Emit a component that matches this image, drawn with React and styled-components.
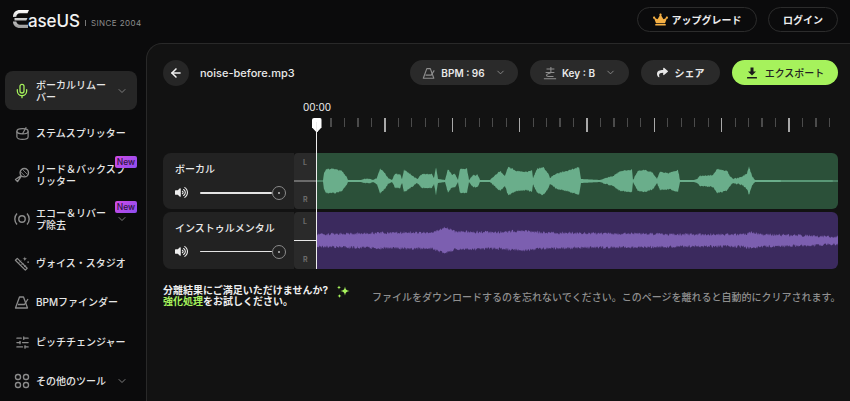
import React from 'react';
import styled, { createGlobalStyle } from 'styled-components';
import { ArrowLeft, ChevronDown, Mic, SlidersHorizontal } from 'lucide-react';
import { FaCrown, FaShare, FaVolumeUp } from 'react-icons/fa';

const GlobalStyle = createGlobalStyle`
    html, body {
        margin: 0;
        height: 100%;
        overflow: hidden;
        background: #0b0b0c;
    }
    #root {
        height: 401px;
    }
    * {
        box-sizing: border-box;
    }
`

const font = `Inter, "Noto Sans CJK JP", sans-serif`

const Page = styled.div`
    width: 850px;
    height: 401px;
    display: flex;
    flex-direction: column;
    font-family: ${font};
    color: #eee;
`

const Header = styled.header`
    height: 43px;
    flex: none;
    display: flex;
    align-items: center;
    justify-content: space-between;
    padding: 0 12px 4px 13px;
`

const Logo = styled.div`
    display: flex;
    align-items: center;
    height: 20px;
    margin-top: 1px;
`

const LogoMarkBox = styled.svg`
    margin-top: -3px;
    flex: none;
`

const LogoName = styled.span`
    font-size: 17px;
    font-weight: 500;
    color: #f2f2f2;
    letter-spacing: -0.1px;
    margin-left: -1px;
    margin-top: 2px;
`

const LogoSince = styled.span`
    font-size: 8px;
    color: #8d8d8d;
    letter-spacing: 0.45px;
    margin: 6px 0 0 5px;
    padding-left: 6px;
    position: relative;

    &::before {
        content: '';
        position: absolute;
        left: 0;
        top: 2px;
        bottom: 2px;
        width: 1px;
        background: #777;
    }
`

const HeaderActions = styled.div`
    display: flex;
    gap: 11px;
`

const OutlineButton = styled.button`
    width: ${p => p.$w}px;
    height: 25px;
    border: 1px solid #2c2c2c;
    border-radius: 13px;
    background: transparent;
    color: #eee;
    font-family: ${font};
    font-size: 10px;
    font-weight: 700;
    display: flex;
    align-items: center;
    justify-content: center;
    gap: 4px;
    padding: 0;
`

const Body = styled.div`
    flex: 1;
    display: flex;
    min-height: 0;
`

const Sidebar = styled.nav`
    width: 146px;
    flex: none;
    padding: 28px 9px 0 5px;
    display: flex;
    flex-direction: column;
`

const NavItem = styled.div`
    position: relative;
    height: ${p => p.$h}px;
    flex: none;
    display: flex;
    align-items: center;
    padding-left: 9px;
    border-radius: 8px;
    background: ${p => (p.$active ? '#262626' : 'transparent')};
    color: #8b8b8b;
`

const NavIcon = styled.span`
    width: 16px;
    flex: none;
    display: flex;
    align-items: center;
    justify-content: center;
`

const NavLabel = styled.span`
    margin-left: 6px;
    font-size: 10px;
    line-height: 12px;
    font-weight: 500;
    color: #e6e6e6;
    white-space: nowrap;
`

const NavChevron = styled(ChevronDown)`
    position: absolute;
    right: 9px;
    top: 50%;
    margin-top: -6px;
    color: #7d7d7d;
`

const NewBadge = styled.span`
    position: absolute;
    right: 0;
    top: ${p => p.$top}px;
    width: 22px;
    height: 12px;
    border-radius: 2px;
    background: linear-gradient(135deg, #d24be6, #8c4df0);
    color: #2c1740;
    font-size: 8.5px;
    font-weight: 500;
    line-height: 12px;
    text-align: center;
`

const Panel = styled.main`
    flex: 1;
    min-width: 0;
    background: #121212;
    border-top: 1px solid #292929;
    border-left: 1px solid #292929;
    border-top-left-radius: 16px;
    padding: 16px 12px 0 16px;
`

const Toolbar = styled.div`
    display: flex;
    align-items: center;
    height: 25px;
`

const BackButton = styled.button`
    width: 26px;
    height: 26px;
    border: 0;
    border-radius: 50%;
    background: #262626;
    color: #f2f2f2;
    display: flex;
    align-items: center;
    justify-content: center;
    padding: 0;
`

const FileName = styled.span`
    margin-left: 11px;
    font-size: 11px;
    font-weight: 500;
    color: #e8e8e8;
`

const ToolbarActions = styled.div`
    margin-left: auto;
    display: flex;
    gap: 12px;
`

const Pill = styled.button`
    width: ${p => p.$w}px;
    height: 25px;
    border: 0;
    border-radius: 13px;
    background: ${p => (p.$primary ? '#a6f25c' : '#2a2a2a')};
    color: ${p => (p.$primary ? '#222' : '#e8e8e8')};
    font-family: ${font};
    font-size: 10px;
    font-weight: ${p => (p.$primary ? 500 : 600)};
    display: flex;
    align-items: center;
    justify-content: center;
    gap: ${p => p.$gap || 5}px;
    padding: 0;
`

const PillIcon = styled.span`
    color: #8f8f8f;
    display: flex;
`

const PillChevron = styled(ChevronDown)`
    color: #8c8c8c;
    margin-left: 5px;
`

const Timeline = styled.div`
    position: relative;
    margin-top: 15px;
`

const TimeLabel = styled.div`
    margin-left: 140px;
    width: 26px;
    height: 18px;
    font-size: 10px;
    line-height: 14px;
    text-align: center;
    color: #eee;
`

const Ruler = styled.div`
    display: flex;
    margin-left: 154px;
    height: 35px;
`

const TickCell = styled.div`
    width: 13.48px;
    flex: none;
`

const Tick = styled.div`
    width: 1.2px;
    height: ${p => (p.$major ? 14 : 9)}px;
    background: ${p => (p.$major ? '#a8a8a8' : '#4b4b4b')};
`

const PlayheadLine = styled.div`
    position: absolute;
    left: 153px;
    top: 22px;
    bottom: 0;
    width: 1.2px;
    background: #ececec;
    z-index: 2;
`

const PlayheadKnob = styled.div`
    position: absolute;
    left: 149px;
    top: 18px;
    width: 9.5px;
    height: 14px;
    background: #fff;
    border-radius: 2px 2px 1px 1px;
    clip-path: polygon(0 0, 100% 0, 100% 68%, 55% 100%, 45% 100%, 0 68%);
    z-index: 2;
`

const Tracks = styled.div`
    display: flex;
    flex-direction: column;
    gap: 3px;
`

const Track = styled.div`
    display: flex;
    height: ${p => p.$h}px;
`

const Controls = styled.div`
    width: 131px;
    flex: none;
    background: #222;
    border-radius: 8px 0 0 8px;
    padding: 9px 8px 0 12px;
`

const TrackName = styled.div`
    font-size: 10px;
    line-height: 14px;
    font-weight: 500;
    color: #eaeaea;
`

const VolumeRow = styled.div`
    display: flex;
    align-items: center;
    margin-top: 9px;
    height: 15px;
    color: #eee;
`

const VolumeBar = styled.div`
    flex: 1;
    height: ${p => p.$thick}px;
    margin-left: 12px;
    background: #e4e4e4;
    border-radius: 1px;
`

const VolumeThumb = styled.div`
    width: 14px;
    height: 14px;
    flex: none;
    border: 1px solid #8a8a8a;
    border-radius: 50%;
    display: flex;
    align-items: center;
    justify-content: center;

    &::after {
        content: '';
        width: 2px;
        height: 2px;
        border-radius: 50%;
        background: #bbb;
    }
`

const Channels = styled.div`
    width: 23px;
    flex: none;
    background: #2a2a2a;
    border-radius: 4px 0 0 4px;
    display: flex;
    flex-direction: column;
    align-items: stretch;
    font-size: 7px;
    font-weight: 700;
    color: #6a6a6a;
`

const ChannelLetter = styled.div`
    flex: 1;
    padding: 5px 0 5px 9px;
    display: flex;
    align-items: ${p => (p.$bottom ? 'flex-end' : 'flex-start')};
`

const ChannelLine = styled.div`
    height: ${p => p.$thick}px;
    background: ${p => p.$color};
`

const WaveBox = styled.div`
    flex: 1;
    min-width: 0;
    background: ${p => p.$bg};
    border-radius: 0 6px 6px 0;
    overflow: hidden;
`

const WaveSvg = styled.svg`
    display: block;
    width: 100%;
    height: 100%;
`

const Footer = styled.div`
    display: flex;
    margin-top: 16px;
`

const Retry = styled.div`
    width: 209px;
    flex: none;
    display: flex;
    align-items: flex-start;
    font-size: 10px;
    line-height: 11px;
    font-weight: 700;
    color: #eee;
`

const Highlight = styled.span`
    color: #a6f25c;
`

const Sparkle = styled.svg`
    margin: 0 0 0 8px;
    flex: none;
`

const Notice = styled.div`
    font-size: 10px;
    line-height: 24px;
    color: #8f8f8f;
    font-weight: 500;
    white-space: nowrap;
`

const StemIcon = () => (
    <svg width="15" height="15" viewBox="0 0 16 16" fill="none" stroke="currentColor" strokeWidth="1.3">
        <path d="M2 5.500c0-1.600 2.600-2.800 6-2.800s6 1.200 6 2.800v6c0 1.600-2.600 2.800-6 2.800s-6-1.200-6-2.800z" />
        <path d="M2 5.500c0 1.600 2.600 2.800 6 2.800s6-1.200 6-2.800M8 8.300l4-7" />
    </svg>
)

const LeadMicIcon = () => (
    <svg width="16" height="16" viewBox="0 0 16 16" fill="none" stroke="currentColor" strokeWidth="1.4" strokeLinejoin="round">
        <circle cx="10.300" cy="5.700" r="4.200" />
        <path d="M7.500 8.800 3.500 14.500 1.500 12.500 7.200 8.500" />
        <path d="M8.500 2.500l5 5M6.800 5l4.500 4.500" strokeWidth="0.8" />
    </svg>
)

const EchoIcon = () => (
    <svg width="16" height="16" viewBox="0 0 16 16" fill="none" stroke="currentColor" strokeWidth="1.4">
        <circle cx="8" cy="8" r="3.200" />
        <path d="M3 2.500a8 8 0 0 0 0 11M13 2.500a8 8 0 0 1 0 11" />
    </svg>
)

const WandIcon = () => (
    <svg width="17" height="17" viewBox="0 0 17 17" fill="none" stroke="currentColor" strokeWidth="1.300">
        <path d="M3.500 3 14 13.500 12 15.500 1.500 5z" strokeLinejoin="round" />
        <path d="M5.500 7.500 7.500 5.500M8 10 10 8M10.500 12.500l2-2" strokeWidth="1" />
        <path d="M11.500 1c.2 1.600.9 2.300 2.500 2.500-1.600.2-2.300.9-2.500 2.500-.2-1.600-.9-2.300-2.500-2.500 1.600-.2 2.300-.9 2.500-2.500z" fill="currentColor" stroke="none" />
        <circle cx="15" cy="7" r="0.900" fill="currentColor" stroke="none" />
    </svg>
)

const MetronomeIcon = ({ size = 16 }) => (
    <svg width={size} height={size} viewBox="0 0 16 16" fill="none" stroke="currentColor" strokeWidth="1.3" strokeLinejoin="round">
        <path d="M5.500 3h4l4 11H1.500z" />
        <path d="M4 10.500h6.500L14 5" />
    </svg>
)

const KeyIcon = () => (
    <svg width="14" height="14" viewBox="0 0 16 16" fill="none" stroke="#8f8f8f" strokeWidth="1.200">
        <path d="M1 14.500h14M4 3.500h9M3 7.500h10M9 1v6c0 2 -5 1 -5 3.500 0 2 5 1.500 8 1.500" />
    </svg>
)

const GridIcon = () => (
    <svg width="16" height="16" viewBox="0 0 16 16" fill="none" stroke="currentColor" strokeWidth="1.400">
        <rect x="1.500" y="1.500" width="5" height="5" rx="2.200" />
        <rect x="9.500" y="1.500" width="5" height="5" rx="2.200" />
        <rect x="1.500" y="9.500" width="5" height="5" rx="2.200" />
        <rect x="9.500" y="9.500" width="5" height="5" rx="2.200" />
    </svg>
)

const DownloadIcon = () => (
    <svg width="12" height="12" viewBox="0 0 12 12" fill="#1c1c1c">
        <path d="M4.500 0.500h3v4h2.500L6 8.500 2 4.500h2.500z" />
        <rect x="1" y="10" width="10" height="1.500" rx="0.500" />
    </svg>
)

const LogoMark = () => (
    <LogoMarkBox width="16" height="18" viewBox="0 0 16 18">
        <defs>
            <linearGradient id="logoFade" x1="0" y1="0" x2="0" y2="1">
                <stop offset="0" stopColor="#ffffff" />
                <stop offset="1" stopColor="#9a9a9a" />
            </linearGradient>
        </defs>
        <path
            fill="url(#logoFade)"
            d="M0 7C0 2.500 3 0 7 0h9l-1.500 3.200H7C4.500 3.200 3.300 5 3.300 6.800zM1.500 8h13l-1.200 2.600H1.500zM0 11.500h3.300c.4 2 1.700 3.200 3.700 3.200h8V18H7c-4 0-7-2.500-7-6.500z"
        />
    </LogoMarkBox>
)

// rough outline of the vocal take, [x, half height] in px from the start of the track
const vocalShape = [
    [0, 0.6], [6, 0.6], [7, 8], [9, 12], [18, 12], [25, 10], [29, 5], [31, 1], [44, 1], [47, 2], [52, 2.500], [56, 1],
    [60, 3], [63, 12], [68, 8], [71, 3], [75, 1], [78, 7], [83, 7], [85, 2], [87, 11], [89, 10], [100, 2], [105, 7],
    [115, 7], [117, 3], [119, 14], [121, 2], [128, 1], [131, 12], [135, 6], [138, 7], [141, 1], [143, 12], [150, 12], [152, 1],
    [156, 6], [161, 6], [163, 1], [173, 1], [183, 10], [188, 5], [191, 14], [200, 10], [210, 9], [215, 11], [216, 3],
    [220, 12], [226, 14], [231, 8], [233, 3], [240, 8], [250, 10], [259, 13], [262, 14], [264, 2], [283, 1], [296, 5],
    [303, 10], [315, 11], [316, 1], [321, 10], [328, 11], [336, 8], [340, 2], [343, 9], [352, 8], [361, 11], [363, 1],
    [377, 1], [380, 2], [383, 5], [396, 6], [400, 12], [410, 10], [413, 5], [416, 2], [425, 4], [430, 8], [432, 14],
    [435, 5], [438, 1], [521, 0.6],
]

// instrumental stays at a fairly even level and thins out at the end
const backingShape = [
    [0, 6], [40, 7], [90, 8], [115, 8], [128, 13], [138, 9], [180, 8], [206, 10], [225, 8], [290, 7], [380, 6], [425, 6],
    [435, 8], [445, 6], [490, 5], [510, 4], [521, 4],
]

const levelAt = (shape, x) => {
    for (let i = 1; i < shape.length; i++) {
        if (x <= shape[i][0]) {
            const [x0, y0] = shape[i - 1]
            const [x1, y1] = shape[i]
            return y0 + ((y1 - y0) * (x - x0)) / (x1 - x0)
        }
    }
    return 1
}

// repeatable noise, so the wave stays the same on every render
const hash = x => {
    const s = Math.sin(x * 127.1) * 43758.5453
    return s - Math.floor(s)
}

const buildWave = (shape, center, noise) => {
    const upper = []
    const lower = []
    for (let x = 0; x <= 521; x += 0.5) {
        const level = levelAt(shape, x)
        const amount = level > 2 ? noise : 0
        const up = (hash(x) - 0.5) * 2 * amount
        const down = (hash(x + 91.7) - 0.5) * 2 * amount
        upper.push(`${x} ${(center - level - up).toFixed(2)}`)
        lower.unshift(`${x} ${(center + level + down).toFixed(2)}`)
    }
    return `M${upper.join('L')}L${lower.join('L')}Z`
}

const Wave = ({ shape, center, noise, height, color }) => (
    <WaveSvg viewBox={`0 0 521 ${height}`} preserveAspectRatio="none">
        <path d={buildWave(shape, center, noise)} fill={color} />
    </WaveSvg>
)

const navItems = [
    { h: 39, label: <>ボーカルリムー<br />バー</>, icon: <Mic size={18} color="#a6f25c" strokeWidth={1.9} />, chevron: true, active: true },
    { h: 46, label: 'ステムスプリッター', icon: <StemIcon /> },
    { h: 38, label: <>リード＆バックスプ<br />リッター</>, icon: <LeadMicIcon />, badgeTop: 0 },
    { h: 50, label: <>エコー＆リバー<br />プ除去</>, icon: <EchoIcon />, chevron: true, badgeTop: 7 },
    { h: 38, label: 'ヴォイス・スタジオ', icon: <WandIcon /> },
    { h: 40, label: 'BPMファインダー', icon: <MetronomeIcon /> },
    { h: 40, label: 'ピッチチェンジャー', icon: <SlidersHorizontal size={15} /> },
    { h: 38, label: 'その他のツール', icon: <GridIcon />, chevron: true },
]

const ticks = Array.from({ length: 39 }, (_, i) => i)

const TrackRow = ({ name, h, thick, lineColor, lineThick, bg, children }) => (
    <Track $h={h}>
        <Controls>
            <TrackName>{name}</TrackName>
            <VolumeRow>
                <FaVolumeUp size={13} />
                <VolumeBar $thick={thick} />
                <VolumeThumb />
            </VolumeRow>
        </Controls>
        <Channels>
            <ChannelLetter>L</ChannelLetter>
            <ChannelLine $thick={lineThick} $color={lineColor} />
            <ChannelLetter $bottom>R</ChannelLetter>
        </Channels>
        <WaveBox $bg={bg}>{children}</WaveBox>
    </Track>
)

const App = () => {
    return (
        <Page>
            <GlobalStyle />
            <Header>
                <Logo>
                    <LogoMark />
                    <LogoName>aseUS</LogoName>
                    <LogoSince>SINCE 2004</LogoSince>
                </Logo>
                <HeaderActions>
                    <OutlineButton $w={120}>
                        <FaCrown size={15} color="#f5b044" />
                        アップグレード
                    </OutlineButton>
                    <OutlineButton $w={70}>ログイン</OutlineButton>
                </HeaderActions>
            </Header>
            <Body>
                <Sidebar>
                    {navItems.map((item, i) => (
                        <NavItem key={i} $h={item.h} $active={item.active}>
                            <NavIcon>{item.icon}</NavIcon>
                            <NavLabel>{item.label}</NavLabel>
                            {item.chevron && <NavChevron size={12} />}
                            {item.badgeTop !== undefined && <NewBadge $top={item.badgeTop}>New</NewBadge>}
                        </NavItem>
                    ))}
                </Sidebar>
                <Panel>
                    <Toolbar>
                        <BackButton><ArrowLeft size={14} strokeWidth={2.6} /></BackButton>
                        <FileName>noise-before.mp3</FileName>
                        <ToolbarActions>
                            <Pill $w={108}>
                                <PillIcon><MetronomeIcon size={14} /></PillIcon>
                                BPM : 96
                                <PillChevron size={11} />
                            </Pill>
                            <Pill $w={99}>
                                <KeyIcon />
                                Key : B
                                <PillChevron size={11} />
                            </Pill>
                            <Pill $w={79} $gap={7}>
                                <FaShare size={11} />
                                シェア
                            </Pill>
                            <Pill $w={106} $gap={7} $primary>
                                <DownloadIcon />
                                エクスポート
                            </Pill>
                        </ToolbarActions>
                    </Toolbar>
                    <Timeline>
                        <TimeLabel>00:00</TimeLabel>
                        <Ruler>
                            {ticks.map(i => (
                                <TickCell key={i}><Tick $major={i % 5 === 0} /></TickCell>
                            ))}
                        </Ruler>
                        <PlayheadKnob />
                        <PlayheadLine />
                        <Tracks>
                            <TrackRow name="ボーカル" h={56} thick={2} lineThick={1.5} lineColor="#6b6b6b" bg="#2b5039">
                                <Wave shape={vocalShape} center={28} noise={0.7} height={56} color="#6aae8b" />
                            </TrackRow>
                            <TrackRow name="インストゥルメンタル" h={57} thick={1.5} lineThick={1.5} lineColor="#e8e8e8" bg="#3b2a5e">
                                <Wave shape={backingShape} center={28.5} noise={1.5} height={57} color="#7c5fb0" />
                            </TrackRow>
                        </Tracks>
                    </Timeline>
                    <Footer>
                        <Retry>
                            <span>
                                分離結果にご満足いただけませんか?<br />
                                <Highlight>強化処理</Highlight>をお試しください。
                            </span>
                            <Sparkle width="14" height="14" viewBox="0 0 14 14" fill="#a6f25c">
                                <path d="M9 1.500c.5 3 1.500 4 4.500 4.500-3 .5-4 1.500-4.500 4.500-.5-3-1.500-4-4.500-4.500 3-.5 4-1.500 4.500-4.500z" />
                                <path d="M3 0.500c.2 1.200.8 1.800 2 2-1.200.2-1.800.8-2 2-.2-1.200-.8-1.800-2-2 1.200-.2 1.800-.8 2-2z" />
                                <path d="M3.500 9c.2 1.200.8 1.800 2 2-1.200.2-1.800.8-2 2-.2-1.200-.8-1.800-2-2 1.200-.2 1.800-.8 2-2z" />
                            </Sparkle>
                        </Retry>
                        <Notice>ファイルをダウンロードするのを忘れないでください。このページを離れると自動的にクリアされます。</Notice>
                    </Footer>
                </Panel>
            </Body>
        </Page>
    )
}

export default App
